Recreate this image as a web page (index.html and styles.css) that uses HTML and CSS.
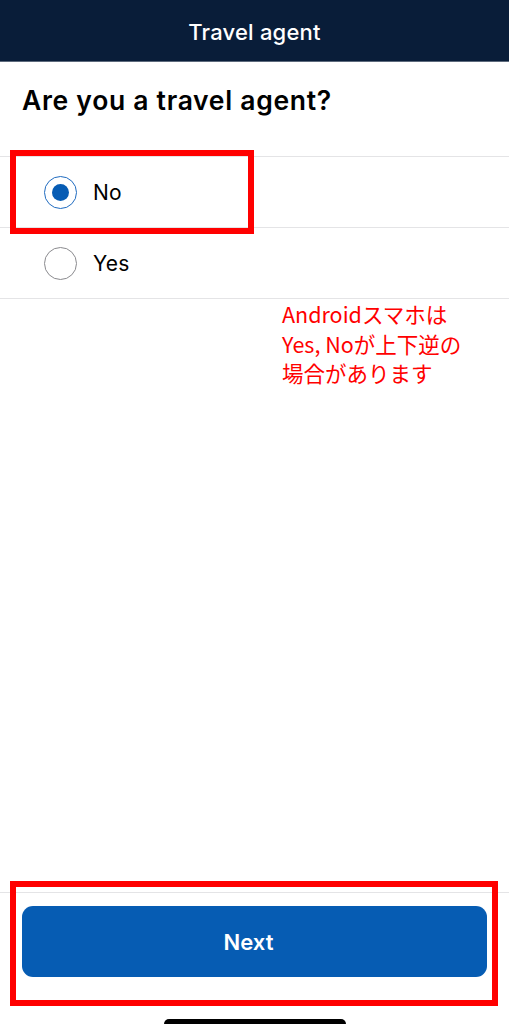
FILE: index.html
```html
<!DOCTYPE html>
<html lang="ja">
<head>
<meta charset="utf-8">
<title>Travel agent</title>
<link rel="stylesheet" href="styles.css">
</head>
<body>
<div class="page">
  <header class="topbar">
    <h1 class="topbar-title">Travel agent</h1>
  </header>
  <h2 class="question">Are you a travel agent?</h2>
  <ul class="options">
    <li class="option option-first">
      <span class="radio radio-checked"><span class="radio-dot"></span></span>
      <span class="option-label">No</span>
      <span class="highlight highlight-option"></span>
    </li>
    <li class="option">
      <span class="radio"></span>
      <span class="option-label">Yes</span>
    </li>
  </ul>
  <p class="note">Androidスマホは<br>Yes, Noが上下逆の<br>場合があります</p>
  <div class="spacer"></div>
  <footer class="footer">
    <span class="highlight highlight-footer"></span>
    <button class="next-btn" type="button">Next</button>
    <div class="home-bar"></div>
  </footer>
</div>
</body>
</html>
```
FILE: styles.css
```css
* { box-sizing: border-box; }
html, body { margin: 0; padding: 0; background: #ffffff; }
body {
  font-family: Inter, "Noto Sans", "Liberation Sans", sans-serif;
  color: #000;
}
.page {
  width: 509px;
  height: 1024px;
  display: flex;
  flex-direction: column;
  overflow: hidden;
}
.topbar {
  height: 62px;
  flex: none;
  background: #091d39;
  border-bottom: 1px solid #5d6a7c;
  display: flex;
  align-items: center;
  justify-content: center;
  padding-top: 2px;
}
.topbar-title {
  margin: 0;
  color: #ffffff;
  font-size: 22px;
  font-weight: 500;
  letter-spacing: 0.2px;
}
.question {
  margin: 0;
  padding: 23px 0 0 22px;
  height: 94px;
  flex: none;
  font-size: 26.5px;
  font-weight: 600;
  letter-spacing: 0.7px;
  line-height: 31px;
}
.options {
  list-style: none;
  margin: 0;
  padding: 0;
  flex: none;
  border-top: 1px solid #e4e4e6;
}
.option {
  position: relative;
  height: 71px;
  border-bottom: 1px solid #e4e4e6;
  display: flex;
  align-items: center;
  padding-left: 44px;
}
.radio {
  width: 33px;
  height: 33px;
  border-radius: 50%;
  border: 1.5px solid #8a8a8e;
  display: flex;
  align-items: center;
  justify-content: center;
  flex: none;
}
.radio-checked { border-color: #1f6bc0; }
.radio-dot {
  width: 17px;
  height: 17px;
  border-radius: 50%;
  background: #075cb4;
}
.option-label {
  margin-left: 16px;
  font-size: 21px;
  font-weight: 400;
  letter-spacing: 0.2px;
}
.highlight {
  position: absolute;
  border: 6px solid #ff0000;
  pointer-events: none;
}
.highlight-option {
  left: 10px;
  top: -7px;
  width: 244px;
  height: 84px;
}
.note {
  margin: 0 0 0 282px;
  flex: none;
  font-family: "Noto Sans CJK JP", "Noto Sans", sans-serif;
  font-size: 21.5px;
  font-weight: 400;
  line-height: 29.5px;
  color: #ff0000;
}
.spacer { flex: 1; }
.footer {
  position: relative;
  height: 132px;
  flex: none;
  border-top: 1px solid #e4e4e6;
  display: flex;
  flex-direction: column;
  align-items: center;
  padding-top: 13px;
}
.highlight-footer {
  left: 10px;
  top: -12px;
  width: 488px;
  height: 125px;
}
.next-btn {
  width: 465px;
  height: 71px;
  flex: none;
  border: none;
  border-radius: 11px;
  background: #065cb3;
  color: #ffffff;
  font-family: Inter, "Noto Sans", sans-serif;
  font-size: 22px;
  font-weight: 600;
  padding: 0 12px 0 0;
}
.home-bar {
  margin-top: 42px;
  flex: none;
  width: 182px;
  height: 10px;
  border-radius: 5px;
  background: #000000;
}
```
